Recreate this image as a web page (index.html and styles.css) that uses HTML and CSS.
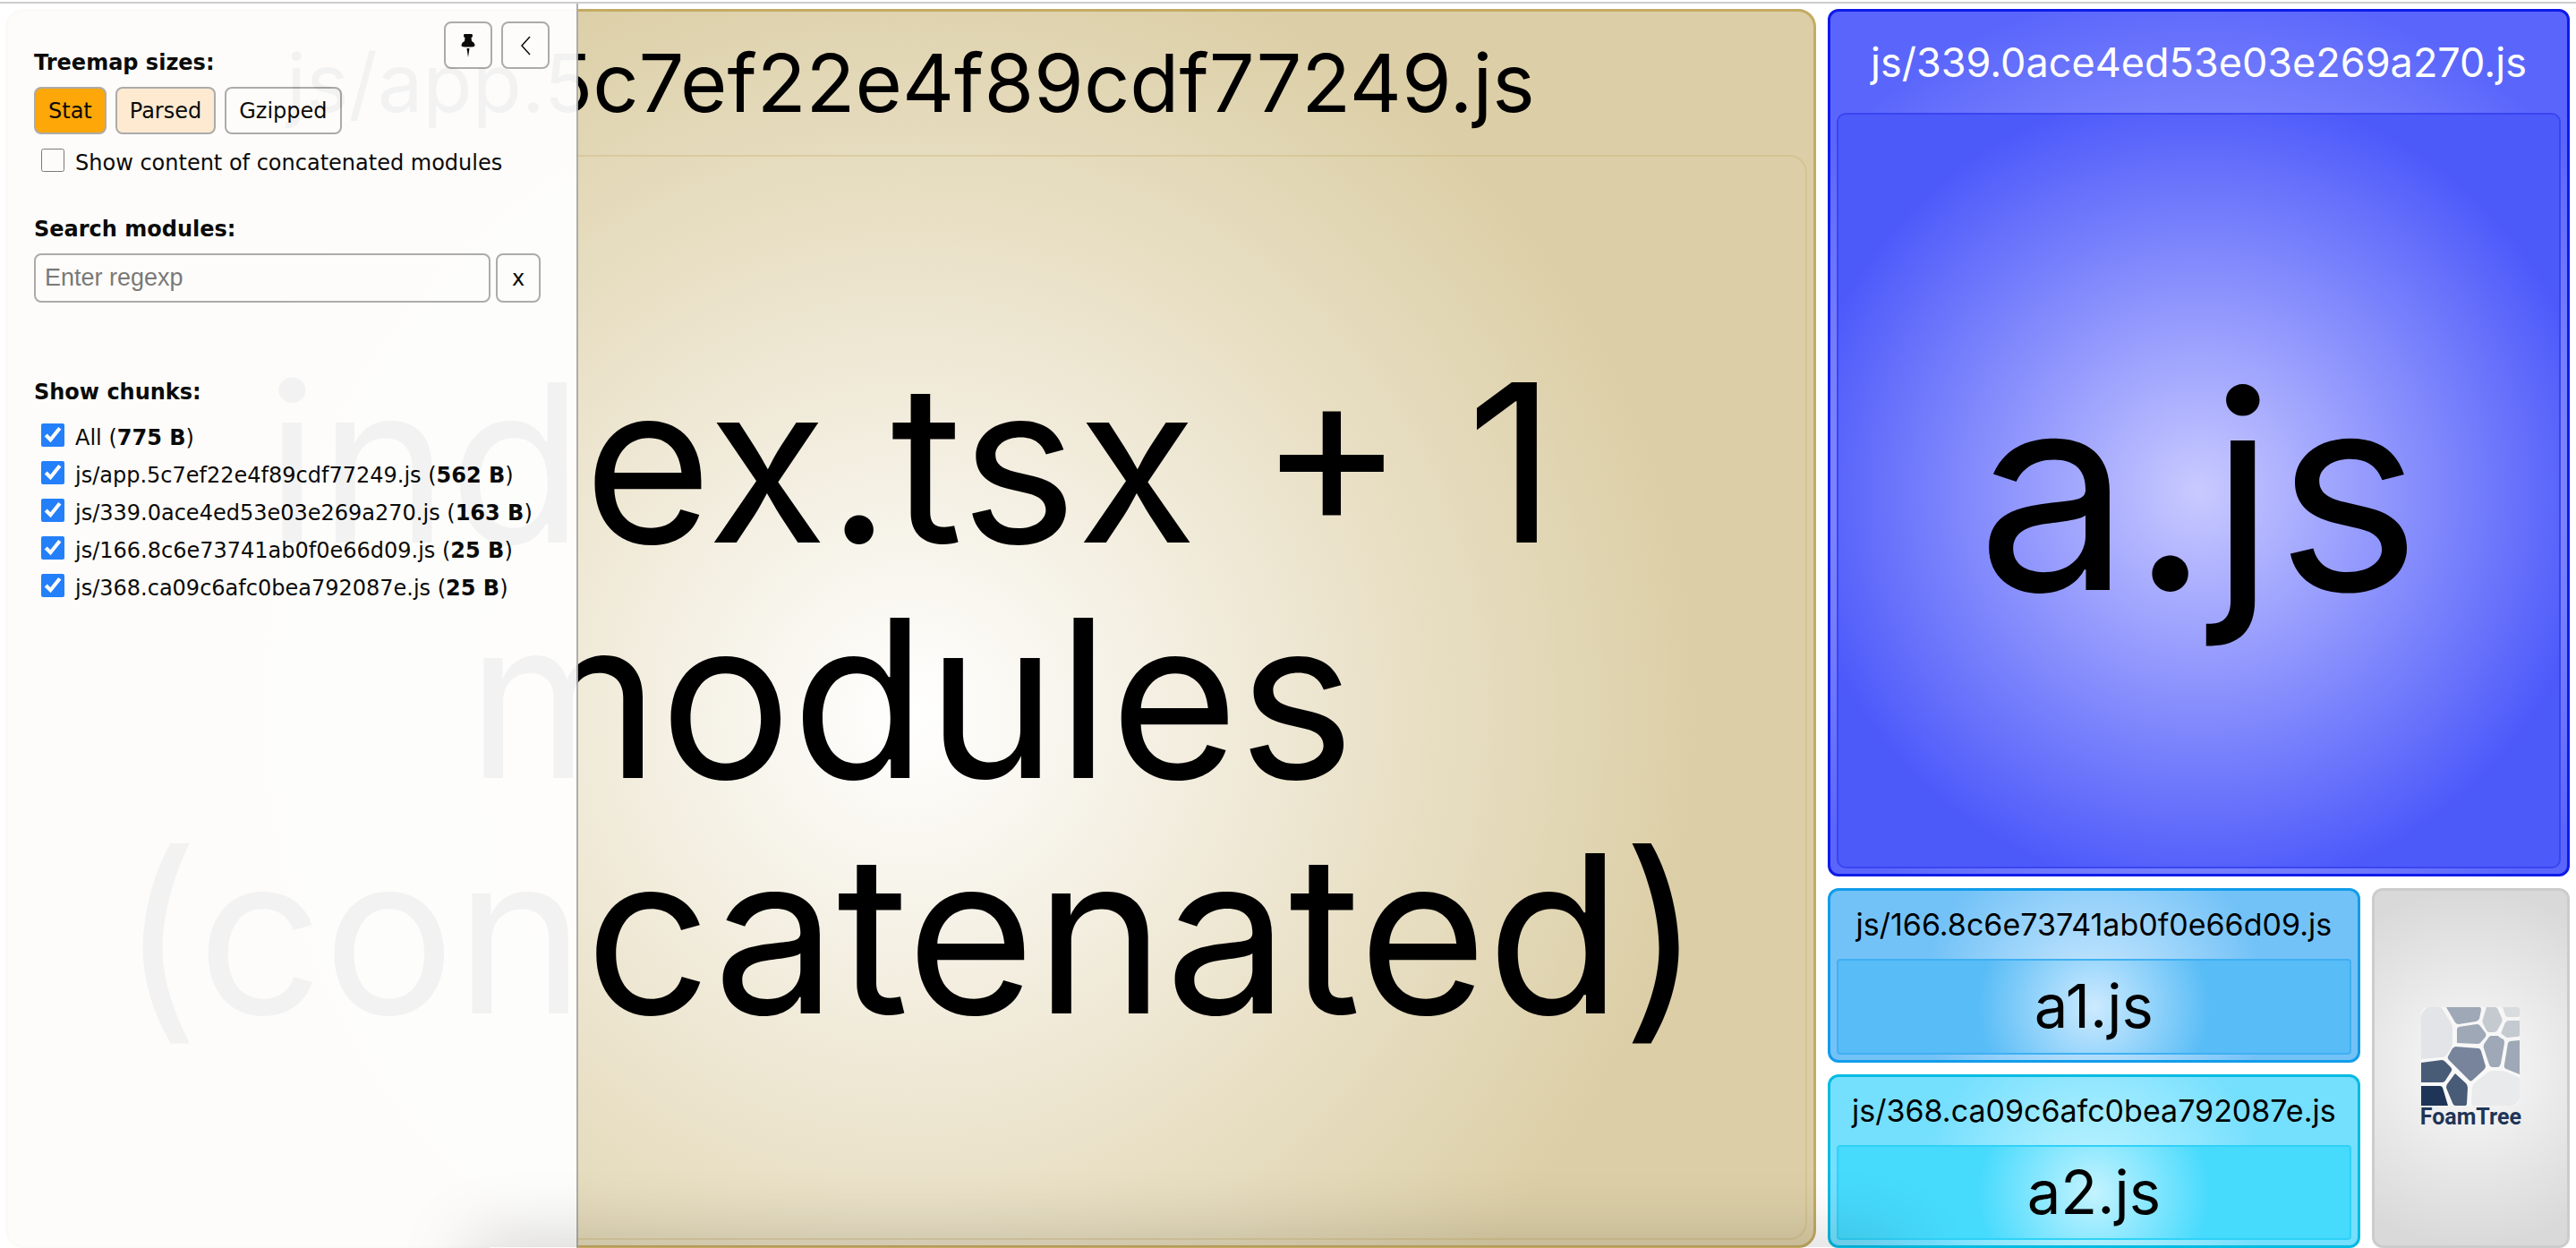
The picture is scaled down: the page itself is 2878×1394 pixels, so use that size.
FILE: index.html
```html
<!DOCTYPE html>
<html lang="en">
<head>
<meta charset="utf-8">
<title>Webpack Bundle Analyzer</title>
<link rel="stylesheet" href="styles.css">
</head>
<body>
<main class="treemap">
  <section class="group group-app">
    <h2 class="group-title">js/app.5c7ef22e4f89cdf77249.js</h2>
    <div class="module"><p class="module-name">index.tsx + 1<br>modules<br>(concatenated)</p></div>
  </section>
  <div class="column">
    <section class="group group-339">
      <h2 class="group-title">js/339.0ace4ed53e03e269a270.js</h2>
      <div class="module"><p class="module-name">a.js</p></div>
    </section>
    <div class="row">
      <div class="stack">
        <section class="group group-small group-166">
          <h2 class="group-title">js/166.8c6e73741ab0f0e66d09.js</h2>
          <div class="module"><p class="module-name">a1.js</p></div>
        </section>
        <section class="group group-small group-368">
          <h2 class="group-title">js/368.ca09c6afc0bea792087e.js</h2>
          <div class="module"><p class="module-name">a2.js</p></div>
        </section>
      </div>
      <a class="brand" href="#foamtree">
        <svg class="brand-mark" viewBox="0 0 110 110" aria-hidden="true">
          <rect width="110" height="110" rx="8" fill="#fafafa" opacity=".7"/>
          <path fill="#e2e4e7" d="M8 0H20Q23 0 25 4L33 17Q35 20 35 24V40Q35 44 32 48L28 54Q26 56 22 56L0 58V10Q2 3 8 0Z"/>
          <path fill="#9ea8b6" d="M28 0H65Q67 0 67 3L65 13Q64 15 61 16L42 19Q39 19 38 17Z"/>
          <path fill="#c5cad1" d="M73 0H82Q85 0 86 3L90 12Q91 15 90 17L85 26Q84 28 81 28H76Q74 28 73 26L69 18Q68 16 69 13Z"/>
          <path fill="#d9dbdf" d="M91 0H108Q110 1 110 3V9Q110 11 107 11H97Q95 11 94 9Z"/>
          <path fill="#c5cad1" d="M97 15H110V31Q110 33 107 33L97 34Q94 34 93 32L90 30Q89 29 90 27L94 17Z"/>
          <path fill="#9ea8b6" d="M42 22L62 19Q65 19 66 21L72 29Q73 31 72 33L66 40Q65 41 63 41L40 40V24Z"/>
          <path fill="#9ea8b6" d="M78 32H85Q87 32 88 34L92 36Q93 37 93 40L89 63Q88 66 86 67H80Q77 67 76 64L70 46Q69 43 71 40L76 33Z"/>
          <path fill="#9ea8b6" d="M99 38L110 37V75L95 69Q92 68 93 64L97 40Z"/>
          <path fill="#77849b" d="M38 44L64 46Q66 46 67 49L72 66Q72 68 70 70L58 81Q55 84 53 81L31 59Q29 57 30 55L35 46Z"/>
          <path fill="#485c78" d="M0 62L23 59Q25 59 27 61L33 67Q35 69 34 71L27 82Q26 84 23 84H0Z"/>
          <path fill="#485c78" d="M38 74L50 85Q52 87 52 90L51 108Q51 110 48 110H38Q36 110 35 107L28 90Q28 88 29 86Z"/>
          <path fill="#1f3558" d="M0 88H21Q23 88 24 90L30 110H0Z"/>
          <path fill="#e8eaec" d="M80 71H90Q93 71 95 72L110 79V101Q109 107 102 110H59Q56 110 56 107L57 90Q57 87 59 85L74 73Q77 71 80 71Z"/>
        </svg>
        <span class="brand-name">FoamTree</span>
      </a>
    </div>
  </div>
</main>

<aside class="sidebar">
  <div class="sidebar-tools">
    <button class="button tool" type="button" aria-label="Pin">
      <svg width="16" height="26" viewBox="0 0 16 26" aria-hidden="true"><path d="M4 0h8q1 0 1 2 0 2-1.500 2l.5 4q3.500 1.500 3.500 5 0 1.500-7.500 1.500T.5 13q0-3.500 3.500-5l.5-4Q3 4 3 2q0-2 1-2ZM6.500 16h3L8 26Z"/></svg>
    </button>
    <button class="button tool" type="button" aria-label="Hide">
      <svg width="12" height="22" viewBox="0 0 12 22" aria-hidden="true"><path d="M11 1 2 11l9 10" fill="none" stroke="#000" stroke-width="1.500"/></svg>
    </button>
  </div>
  <section class="block">
    <h3 class="heading">Treemap sizes:</h3>
    <div class="sizes">
      <button class="button size-active" type="button">Stat</button>
      <button class="button size-hover" type="button">Parsed</button>
      <button class="button" type="button">Gzipped</button>
    </div>
    <div class="options">
      <label class="check"><input type="checkbox"><span>Show content of concatenated modules</span></label>
    </div>
  </section>
  <section class="block search-block">
    <label class="heading" for="search">Search modules:</label>
    <div class="search">
      <input class="search-input" id="search" type="text" placeholder="Enter regexp">
      <button class="button" type="button">x</button>
    </div>
  </section>
  <section class="block">
    <h3 class="heading">Show chunks:</h3>
    <div class="chunks">
      <label class="check"><input type="checkbox" checked><span>All (<b>775 B</b>)</span></label>
      <label class="check"><input type="checkbox" checked><span>js/app.5c7ef22e4f89cdf77249.js (<b>562 B</b>)</span></label>
      <label class="check"><input type="checkbox" checked><span>js/339.0ace4ed53e03e269a270.js (<b>163 B</b>)</span></label>
      <label class="check"><input type="checkbox" checked><span>js/166.8c6e73741ab0f0e66d09.js (<b>25 B</b>)</span></label>
      <label class="check"><input type="checkbox" checked><span>js/368.ca09c6afc0bea792087e.js (<b>25 B</b>)</span></label>
    </div>
  </section>
</aside>
<div class="bottom-shade"></div>
</body>
</html>
```
FILE: styles.css
```css
* { box-sizing: border-box; }

body {
  position: relative;
  display: flex;
  height: 100vh;
  margin: 0;
  padding-top: 2px;
  overflow: hidden;
  background: #fff;
  color: #000;
  font-family: Verdana, "DejaVu Sans", sans-serif;
}

h2, h3, p { margin: 0; font-weight: 400; }

/* treemap */
.treemap {
  flex: 1;
  display: grid;
  grid-template-columns: 2023fr 829fr;
  gap: 13px;
  padding: 6px 7px 0 6px;
  border-top: 2px solid #ccc;
  font-family: Inter, "Liberation Sans", sans-serif;
}

.column { display: grid; grid-template-rows: 969fr 402fr; gap: 13px; min-height: 0; }
.row { display: grid; grid-template-columns: 594fr 221fr; gap: 13px; min-height: 0; }
.stack { display: grid; grid-template-rows: 1fr 1fr; gap: 13px; min-height: 0; }

.group {
  display: flex;
  flex-direction: column;
  min-height: 0;
  padding: 0 7px 6px;
  border: 3px solid var(--edge);
  border-radius: 12px;
  text-align: center;
}

.group-title {
  display: flex;
  align-items: center;
  justify-content: center;
  height: 113px;
  font-size: 45px;
  line-height: 56px;
  white-space: nowrap;
}

.module {
  flex: 1;
  display: flex;
  align-items: center;
  justify-content: center;
  min-height: 0;
  border: 2px solid var(--inner-edge);
  border-radius: 10px;
}

.module-name { white-space: nowrap; }

.group-app {
  --edge: #c4ab63;
  --inner-edge: rgba(196, 171, 99, .3);
  border-radius: 20px;
  background: radial-gradient(circle 880px at 50% 57%, #fff, #e9e0c6 62%, #dccfa7);
}
.group-app .group-title { height: 160px; font-size: 90px; line-height: 104px; }
.group-app .module { border-radius: 20px; }
.group-app .module-name { font-size: 246px; line-height: 263px; }

.group-339 {
  --edge: #0f1be8;
  --inner-edge: #3a45f0;
  background: radial-gradient(circle 560px at 50% 55%, #d0d0ff, #5a66fb);
}
.group-339 .group-title { color: #fff; }
.group-339 .module { background: radial-gradient(circle 450px at 50% 50%, #c9caff, #4d5afa); }
.group-339 .module-name { font-size: 306px; line-height: 360px; }

.group-small .group-title { height: 76px; font-size: 34px; line-height: 42px; }
.group-small .module { border-radius: 4px; }
.group-small .module-name { font-size: 67px; line-height: 80px; }

.group-166 {
  --edge: #129ceb;
  --inner-edge: #3fb0f2;
  background: radial-gradient(circle 190px at 50% 66%, #cfeaff, #73c2f7);
}
.group-166 .module { background: radial-gradient(circle 130px at 50% 50%, #cdeaff, #58bcf6); }
.group-368 {
  --edge: #04bbe2;
  --inner-edge: #2fd2f8;
  background: radial-gradient(circle 190px at 50% 66%, #c4f5ff, #75dffe);
}
.group-368 .module { background: radial-gradient(circle 130px at 50% 50%, #c4f3ff, #46dafd); }

.brand {
  display: flex;
  flex-direction: column;
  align-items: center;
  justify-content: center;
  border: 3px solid #ccc;
  border-radius: 12px;
  background: radial-gradient(circle 200px at 50% 50%, #fafafa, #d9d9d9);
  color: #1f3558;
  font: 700 25px/26px Roboto, "Liberation Sans", sans-serif;
  text-decoration: none;
}
.brand-mark { width: 110px; height: 110px; }

/* sidebar */
.sidebar {
  position: absolute;
  top: 4px;
  bottom: 0;
  left: 0;
  display: flex;
  flex-direction: column;
  width: 646px;
  padding: 51px 40px 0 38px;
  border-right: 2px solid #aaa;
  background: #fff;
  opacity: .95;
  font-size: 24px;
  line-height: 30px;
}

.sidebar-tools {
  position: absolute;
  top: 20px;
  right: 30px;
  display: flex;
  gap: 10px;
}

.heading { display: block; font-size: 24px; font-weight: 700; line-height: 30px; }

.button {
  height: 53px;
  padding: 0 14px;
  border: 2px solid #aaa;
  border-radius: 8px;
  background: #fff;
  color: #000;
  font: 24px/28px Verdana, "DejaVu Sans", sans-serif;
}
.tool { display: flex; align-items: center; justify-content: center; width: 54px; padding: 0; }
.size-active { background: #ffa500; }
.size-hover { background: #ffecd4; }

.sizes { display: flex; gap: 10px; margin-top: 12px; }
.options { margin-top: 11px; }

.check { display: flex; align-items: center; gap: 12px; height: 42px; padding-left: 8px; white-space: nowrap; }
.check input { width: 26px; height: 26px; margin: 0 0 6px; accent-color: #1a7bff; }

.block { display: flex; flex-direction: column; }
.block + .block { margin-top: 38px; }

.search { display: flex; gap: 6px; margin-top: 12px; }
.search-input {
  flex: 1;
  min-width: 0;
  height: 55px;
  padding: 0 10px;
  border: 2px solid #aaa;
  border-radius: 8px;
  background: #fff;
  font: 27px/32px "Liberation Sans", sans-serif;
}
.search .button { width: 50px; height: 55px; }
.search-block + .block { margin-top: 85px; }
.chunks { margin-top: 15px; }

/* soft shade that rises from the bottom edge of the window */
.bottom-shade {
  position: absolute;
  right: 27%;
  bottom: 0;
  left: 19%;
  height: 1px;
  box-shadow: 0 20px 80px 20px rgba(0, 0, 0, .25);
  pointer-events: none;
}
```
